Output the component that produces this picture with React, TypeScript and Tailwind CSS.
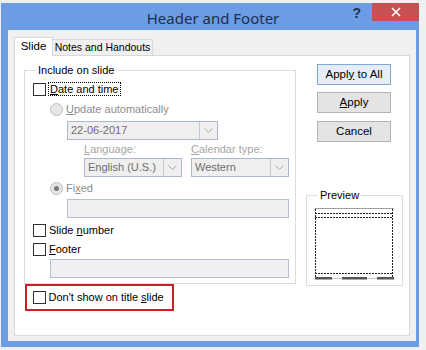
import React from "react";

const Check = () => (
  <span className="block w-[13px] h-[13px] border border-[#333333] bg-white shrink-0" />
);

const Radio = ({ checked }: { checked?: boolean }) => (
  <span className="w-[13px] h-[13px] rounded-full border border-[#bdbdbd] bg-[#e6e6e6] flex items-center justify-center shrink-0">
    {checked && <span className="block w-[5px] h-[5px] rounded-full bg-[#7a7a7a]" />}
  </span>
);

const Chevron = () => (
  <svg width="9" height="5" viewBox="0 0 9 5">
    <path d="M0.5 0.5 L4.5 4.5 L8.5 0.5" fill="none" stroke="#a8a8a8" strokeWidth="1" />
  </svg>
);

const Select = ({ className, text }: { className: string; text: string }) => (
  <div className={"h-[19px] border border-[#abb8ca] bg-[#efefef] flex items-stretch " + className}>
    <div className="flex-1 pl-[3px] flex items-center text-[#6d6d6d] leading-none whitespace-nowrap">{text}</div>
    <div className="w-[18px] border-l border-[#c3cbd6] flex items-center justify-center">
      <Chevron />
    </div>
  </div>
);

const Btn = ({ children, def }: { children: React.ReactNode; def?: boolean }) => (
  <div
    className={
      "ml-[11px] w-[74px] h-[21px] flex items-center justify-center text-[11.5px] leading-none border whitespace-nowrap " +
      (def ? "border-[#7fa8d4] bg-[#e7edf5]" : "border-[#b3b3b3] bg-[#e4e4e4]")
    }
  >
    {children}
  </div>
);

export default function App() {
  return (
    <div className="w-[426px] h-[350px] overflow-hidden bg-[#eef0f2] font-['Liberation_Sans',Arial,sans-serif] text-[11px] text-black">
      <div className="ml-[1px] mt-[3px] w-[418px] h-[344px] bg-[#6b9ce4] flex flex-col">
        {/* title bar */}
        <div className="h-[27px] flex items-start shrink-0">
          <div className="w-[68px]" />
          <div className="flex-1 text-center text-[15px] text-[#1d2f4d] pt-[6px] pl-[6px] leading-[18px] font-['Noto_Sans',sans-serif]">
            Header and Footer
          </div>
          <div className="w-[68px] flex items-start justify-end">
            <span className="text-[14px] font-bold text-[#1d2f4d] mr-[11px] mt-[2px] leading-[16px]">?</span>
            <div className="w-[47px] h-[18px] bg-[#c75050] flex items-center justify-center">
              <svg width="10" height="10" viewBox="0 0 10 10">
                <path d="M1 1 L9 9 M9 1 L1 9" stroke="white" strokeWidth="1.6" />
              </svg>
            </div>
          </div>
        </div>

        {/* client */}
        <div className="ml-[7px] mr-[3px] h-[311px] bg-[#f0f0f0] pt-[7px] shrink-0">
          {/* tabs */}
          <div className="flex items-end h-[18px] pl-[6px]">
            <div className="relative z-10 -mb-px h-[19px] w-[39px] bg-white border border-[#d9d9d9] border-b-0 flex items-center justify-center text-[11.5px]">
              Slide
            </div>
            <div className="h-[16px] w-[100px] shrink-0 bg-[#f0f0f0] border border-[#d9d9d9] border-b-0 border-l-0 flex items-center justify-center text-[10.5px] whitespace-nowrap">
              Notes and Handouts
            </div>
          </div>

          {/* panel */}
          <div className="ml-[6px] w-[396px] h-[281px] border border-[#d9d9d9] bg-white flex">
            {/* left column */}
            <div className="ml-[9px] w-[272px] flex flex-col">
              <fieldset className="mt-[6px] border border-[#dcdcdc] pl-[8px] pb-[5px]">
                <legend className="ml-[3px] px-[2px] leading-[16px]">Include on slide</legend>
                <div className="mt-[3px] h-[16px] flex items-center">
                  <Check />
                  <span className="ml-[2px] border border-dotted border-black px-[1px] leading-[12px]">
                    <span className="underline">D</span>ate and time
                  </span>
                </div>
                <div className="mt-[4px] h-[16px] flex items-center ml-[17px]">
                  <Radio />
                  <span className="ml-[3px] text-[#8d8d8d]">
                    <span className="underline">U</span>pdate automatically
                  </span>
                </div>
                <div className="mt-[4px] ml-[34px]">
                  <Select className="w-[151px]" text="22-06-2017" />
                </div>
                <div className="mt-[2px] h-[14px] flex items-center ml-[51px] text-[#a6a6a6]">
                  <span className="w-[107px]">
                    <span className="underline">L</span>anguage:
                  </span>
                  <span>
                    <span className="underline">C</span>alendar type:
                  </span>
                </div>
                <div className="mt-[2px] flex ml-[51px]">
                  <Select className="w-[98px]" text="English (U.S.)" />
                  <Select className="ml-[9px] w-[98px]" text="Western" />
                </div>
                <div className="mt-[3px] h-[16px] flex items-center ml-[17px]">
                  <Radio checked />
                  <span className="ml-[3px] text-[#8d8d8d]">
                    Fi<span className="underline">x</span>ed
                  </span>
                </div>
                <div className="mt-[3px] ml-[34px] w-[222px] h-[19px] border border-[#b5c0d0] bg-[#efefef]" />
                <div className="mt-[4px] h-[16px] flex items-center">
                  <Check />
                  <span className="ml-[3px]">
                    Slide <span className="underline">n</span>umber
                  </span>
                </div>
                <div className="mt-[3px] h-[16px] flex items-center">
                  <Check />
                  <span className="ml-[3px]">
                    <span className="underline">F</span>ooter
                  </span>
                </div>
                <div className="mt-[2px] ml-[17px] w-[239px] h-[19px] border border-[#b5c0d0] bg-[#efefef]" />
              </fieldset>
              <div className="ml-[1px] w-[149px] h-[27px] border-[2.5px] border-[#d01c24] flex items-center pl-[5.5px]">
                <Check />
                <span className="ml-[3px]">
                  Don't show on title <span className="underline">s</span>lide
                </span>
              </div>
            </div>

            {/* right column */}
            <div className="ml-[10px] w-[97px] flex flex-col">
              <div className="mt-[8px]">
                <Btn def>
                  Appl<span className="underline">y</span>&nbsp;to All
                </Btn>
              </div>
              <div className="mt-[7px]">
                <Btn>
                  <span className="underline">A</span>pply
                </Btn>
              </div>
              <div className="mt-[8px]">
                <Btn>Cancel</Btn>
              </div>
              <fieldset className="mt-[45px] border border-[#dcdcdc] pl-[8px] pb-[5px]">
                <legend className="ml-[3px] px-[2px] leading-[16px]">Preview</legend>
                <div className="mt-[5px]">
                  <svg width="79" height="72" viewBox="0 0 79 72" className="block">
                    <line x1="0" y1="0.5" x2="79" y2="0.5" stroke="#a0a0a0" />
                    <line x1="0.5" y1="1" x2="0.5" y2="69" stroke="#222" strokeDasharray="2 1" />
                    <line x1="77.5" y1="1" x2="77.5" y2="69" stroke="#222" strokeDasharray="2 1" />
                    <line x1="0" y1="5.5" x2="78" y2="5.5" stroke="#222" strokeDasharray="2 1" />
                    <line x1="0" y1="9.5" x2="78" y2="9.5" stroke="#222" strokeDasharray="2 1" />
                    <line x1="0" y1="65.5" x2="78" y2="65.5" stroke="#222" strokeDasharray="2 1" />
                    <line x1="0" y1="70.5" x2="79" y2="70.5" stroke="#c8c8c8" />
                    <rect x="0" y="69" width="17" height="2.5" fill="#555" />
                    <rect x="27" y="69" width="25" height="2.5" fill="#555" />
                    <rect x="62" y="69" width="17" height="2.5" fill="#555" />
                  </svg>
                </div>
              </fieldset>
            </div>
          </div>
        </div>
      </div>
    </div>
  );
}
